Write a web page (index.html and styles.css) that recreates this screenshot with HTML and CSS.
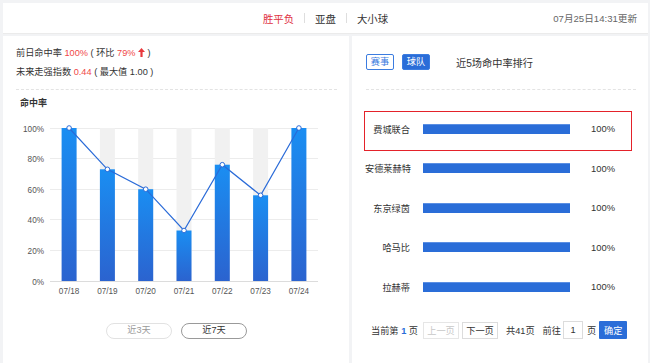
FILE: index.html
```html
<!DOCTYPE html>
<html lang="zh">
<head>
    <meta charset="UTF-8">
    <title>命中率</title>
    <meta name="viewport" content="width=device-width, initial-scale=1.0">
    <link rel="stylesheet" href="styles.css">
</head>
<body>
    <div class="page">
        <header class="top-bar">
            <span></span>
            <nav class="play-tabs">
                <span class="active">胜平负</span>
                <i class="sep"></i>
                <span>亚盘</span>
                <i class="sep"></i>
                <span>大小球</span>
            </nav>
            <span class="update-time">07月25日14:31更新</span>
        </header>

        <div class="main">
            <section class="panel panel-left">
                <div class="stat-line">前日命中率 <em>100%</em> ( 环比 <em>79%</em>
                    <svg class="up-arrow" width="7" height="9" viewBox="0 0 7 9"><path d="M3.5 0 L7 4 L4.6 4 L4.6 9 L2.4 9 L2.4 4 L0 4 Z" fill="#e8393d"/></svg> )
                </div>
                <div class="stat-line">未来走强指数 <em>0.44</em> ( 最大值 1.00 )</div>
                <div class="divider"></div>
                <div class="chart-title">命中率</div>

                <svg class="chart" width="316" height="190" viewBox="0 0 316 190">
                    <defs>
                        <linearGradient id="barFill" x1="0" y1="0" x2="0" y2="1">
                            <stop offset="0" stop-color="#1a8ef2"/>
                            <stop offset="1" stop-color="#2b63cf"/>
                        </linearGradient>
                    </defs>
                    <!-- 网格线 -->
                    <g stroke="#ececec" stroke-width="1">
                        <line x1="34" y1="16.5" x2="302" y2="16.5"/>
                        <line x1="34" y1="46.5" x2="302" y2="46.5"/>
                        <line x1="34" y1="77.5" x2="302" y2="77.5"/>
                        <line x1="34" y1="107.5" x2="302" y2="107.5"/>
                        <line x1="34" y1="138.5" x2="302" y2="138.5"/>
                        <line x1="34" y1="169.5" x2="302" y2="169.5" stroke="#dcdcdc"/>
                    </g>
                    <g class="axis-label" text-anchor="end">
                        <text x="28" y="19.5">100%</text>
                        <text x="28" y="49.5">80%</text>
                        <text x="28" y="80.5">60%</text>
                        <text x="28" y="110.5">40%</text>
                        <text x="28" y="141.5">20%</text>
                        <text x="28" y="172.5">0%</text>
                    </g>
                    <!-- 背景柱 -->
                    <g fill="#f1f1f1">
                        <rect x="83.9" y="16" width="15" height="153"/>
                        <rect x="122.2" y="16" width="15" height="153"/>
                        <rect x="160.5" y="16" width="15" height="153"/>
                        <rect x="198.8" y="16" width="15" height="153"/>
                        <rect x="237.1" y="16" width="15" height="153"/>
                    </g>
                    <g fill="url(#barFill)">
                        <rect x="45.6" y="16" width="15" height="153"/>
                        <rect x="83.9" y="57.3" width="15" height="111.7"/>
                        <rect x="122.2" y="77.2" width="15" height="91.8"/>
                        <rect x="160.5" y="118.5" width="15" height="50.5"/>
                        <rect x="198.8" y="52.7" width="15" height="116.3"/>
                        <rect x="237.1" y="83.3" width="15" height="85.7"/>
                        <rect x="275.4" y="16" width="15" height="153"/>
                    </g>
                    <polyline points="53.1,16 91.4,57.3 129.7,77.2 168,118.5 206.3,52.7 244.6,83.3 282.9,16"
                              fill="none" stroke="#2a6bd8" stroke-width="1.2"/>
                    <g fill="#fff" stroke="#2a6bd8" stroke-width="1">
                        <circle cx="53.1" cy="16" r="2.3"/>
                        <circle cx="91.4" cy="57.3" r="2.3"/>
                        <circle cx="129.7" cy="77.2" r="2.3"/>
                        <circle cx="168" cy="118.5" r="2.3"/>
                        <circle cx="206.3" cy="52.7" r="2.3"/>
                        <circle cx="244.6" cy="83.3" r="2.3"/>
                        <circle cx="282.9" cy="16" r="2.3"/>
                    </g>
                    <g class="axis-label" text-anchor="middle">
                        <text x="53.1" y="182">07/18</text>
                        <text x="91.4" y="182">07/19</text>
                        <text x="129.7" y="182">07/20</text>
                        <text x="168" y="182">07/21</text>
                        <text x="206.3" y="182">07/22</text>
                        <text x="244.6" y="182">07/23</text>
                        <text x="282.9" y="182">07/24</text>
                    </g>
                </svg>

                <div class="range-switch">
                    <button class="range-btn">近3天</button>
                    <button class="range-btn active">近7天</button>
                </div>
            </section>

            <section class="panel panel-right">
                <div class="rank-head">
                    <span class="tag tag-outline">赛事</span>
                    <span class="tag tag-fill">球队</span>
                    <span class="rank-title">近5场命中率排行</span>
                </div>
                <div class="divider"></div>

                <ul class="rank-list">
                    <li class="rank-row selected">
                        <span class="team">费城联合</span>
                        <span class="bar"><span class="bar-fill" style="width:100%"></span></span>
                        <span class="pct">100%</span>
                    </li>
                    <li class="rank-row">
                        <span class="team">安德莱赫特</span>
                        <span class="bar"><span class="bar-fill" style="width:100%"></span></span>
                        <span class="pct">100%</span>
                    </li>
                    <li class="rank-row">
                        <span class="team">东京绿茵</span>
                        <span class="bar"><span class="bar-fill" style="width:100%"></span></span>
                        <span class="pct">100%</span>
                    </li>
                    <li class="rank-row">
                        <span class="team">哈马比</span>
                        <span class="bar"><span class="bar-fill" style="width:100%"></span></span>
                        <span class="pct">100%</span>
                    </li>
                    <li class="rank-row">
                        <span class="team">拉赫蒂</span>
                        <span class="bar"><span class="bar-fill" style="width:100%"></span></span>
                        <span class="pct">100%</span>
                    </li>
                </ul>

                <div class="pager">
                    <span class="pager-info">当前第 <b>1</b> 页</span>
                    <button class="pager-btn disabled">上一页</button>
                    <button class="pager-btn next">下一页</button>
                    <span class="pager-total">共41页</span>
                    <span class="pager-goto">前往</span>
                    <input class="pager-input" type="text" value="1">
                    <span class="pager-unit">页</span>
                    <button class="pager-ok">确定</button>
                </div>
            </section>
        </div>
    </div>
</body>
</html>
```

FILE: styles.css
```css
* {
    box-sizing: border-box;
}
body {
    margin: 0;
    font-family: "Liberation Sans", "Noto Sans CJK SC", sans-serif;
    font-size: 9.2px;
    color: #333;
    background-color: #f2f3f5;
}
.page {
    height: 363px;
    padding: 3px 2px 0 3px;
    display: flex;
    flex-direction: column;
    gap: 2px;
    overflow: hidden;
}
.top-bar {
    height: 31px;
    background-color: #fff;
    border-bottom: 1px solid #ebebeb;
    display: grid;
    grid-template-columns: 1fr auto 1fr;
    align-items: center;
}
.play-tabs {
    display: flex;
    align-items: center;
    font-size: 10.4px;
    color: #333;
}
.play-tabs .active {
    color: #e0313f;
}
.play-tabs .sep {
    width: 1px;
    height: 10px;
    margin: 0 10px;
    background-color: #dedede;
}
.update-time {
    justify-self: end;
    padding-right: 11px;
    font-size: 9.6px;
    color: #666;
}
.main {
    flex: 1;
    display: flex;
    gap: 3px;
}
.panel {
    background-color: #fff;
}
.panel-left {
    width: 346px;
    padding: 8px 12px 0 13px;
}
.panel-right {
    flex: 1;
    padding: 18px 12px 0 14px;
}
.stat-line {
    line-height: 19px;
    color: #333;
}
.stat-line em {
    font-style: normal;
    color: #f04848;
}
.up-arrow {
    vertical-align: -1px;
}
.divider {
    border-top: 1px dashed #e3e3e3;
    margin-top: 7px;
}
.chart-title {
    margin-top: 6px;
    padding-left: 4px;
    line-height: 14px;
    font-size: 9px;
    font-weight: bold;
}
.chart {
    display: block;
    margin-top: 2px;
}
.axis-label {
    font-family: "Liberation Sans", "Noto Sans CJK SC", sans-serif;
    font-size: 8.2px;
    fill: #555;
}
.range-switch {
    display: flex;
    justify-content: center;
    gap: 9px;
    margin-top: 21px;
}
.range-btn {
    width: 66px;
    height: 15.5px;
    padding: 0;
    border: 1px solid #e2e2e2;
    border-radius: 8px;
    background-color: #fff;
    font-family: inherit;
    font-size: 9.2px;
    color: #9a9a9a;
    line-height: 13px;
}
.range-btn.active {
    border-color: #9a9a9a;
    color: #333;
}
.rank-head {
    display: flex;
    align-items: center;
    height: 16px;
}
.tag {
    width: 28px;
    height: 16px;
    border-radius: 2px;
    font-size: 9.2px;
    line-height: 14px;
    text-align: center;
    border: 1px solid #3b7ce0;
}
.tag-outline {
    color: #3b7ce0;
    background-color: #fff;
}
.tag-fill {
    margin-left: 8px;
    color: #fff;
    background-color: #2a6dd8;
}
.rank-title {
    margin-left: 26px;
    font-size: 10.2px;
    color: #333;
}
.panel-right .divider {
    margin-top: 19px;
}
.rank-list {
    list-style: none;
    margin: 21px 0 0 -2px;
    padding: 0;
    width: 268px;
}
.rank-row {
    height: 39.5px;
    padding-bottom: 4.5px;
    border: 1.5px solid transparent;
    display: flex;
    align-items: center;
}
.rank-row.selected {
    border-color: #e4222a;
}
.rank-row .team {
    width: 45px;
    text-align: right;
    color: #333;
    white-space: nowrap;
}
.rank-row .bar {
    width: 147px;
    height: 10px;
    margin-left: 13px;
    display: flex;
}
.rank-row .bar-fill {
    height: 100%;
    background-color: #2a6dd8;
    box-shadow: inset 0 1px 0 #5b8fe3;
}
.rank-row .pct {
    margin-left: 21px;
    font-size: 9.4px;
    color: #333;
}
.pager {
    display: flex;
    align-items: center;
    height: 18px;
    margin-top: 12.5px;
    margin-left: 5px;
    white-space: nowrap;
}
.pager-info b {
    color: #2a6dd8;
}
.pager-btn {
    width: 36px;
    height: 17px;
    padding: 0;
    border: 1px solid #dcdcdc;
    background-color: #fff;
    font-family: inherit;
    font-size: 9.2px;
    color: #333;
}
.pager-btn.disabled {
    margin-left: 5px;
    color: #c8c8c8;
    border-color: #e6e6e6;
}
.pager-btn.next {
    margin-left: 3px;
}
.pager-total {
    margin-left: 8px;
}
.pager-goto {
    margin-left: 8px;
}
.pager-input {
    width: 20px;
    height: 18px;
    margin-left: 2px;
    padding: 0;
    border: 1px solid #dcdcdc;
    text-align: center;
    font-family: inherit;
    font-size: 9.2px;
    color: #333;
}
.pager-unit {
    margin-left: 4px;
}
.pager-ok {
    width: 28px;
    height: 18px;
    margin-left: 3px;
    padding: 0;
    border: none;
    border-radius: 1px;
    background-color: #2a6dd8;
    color: #fff;
    font-family: inherit;
    font-size: 9.2px;
}
```
